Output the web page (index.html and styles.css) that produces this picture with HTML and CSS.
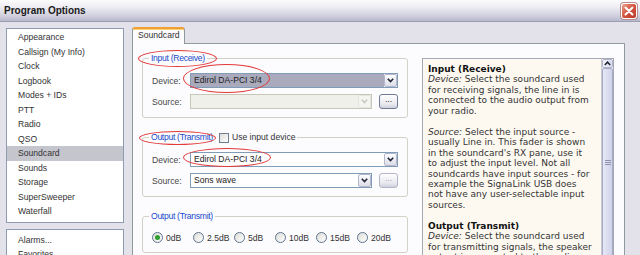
FILE: index.html
```html
<!DOCTYPE html>
<html lang="en">
<head>
    <meta charset="UTF-8">
    <title>Program Options</title>
    <link rel="stylesheet" href="styles.css">
</head>
<body>
    <div class="titlebar">
        <span class="title">Program Options</span>
        <span class="close">
            <svg width="10" height="10" viewBox="0 0 10 10"><path d="M1.5 1.5 L8.5 8.5 M8.5 1.5 L1.5 8.5" stroke="#fff" stroke-width="2" stroke-linecap="round"/></svg>
        </span>
    </div>

    <div class="main">
        <!-- page list -->
        <div class="sidebar">
            <ul class="nav-list">
                <li>Appearance</li>
                <li>Callsign (My Info)</li>
                <li>Clock</li>
                <li>Logbook</li>
                <li>Modes + IDs</li>
                <li>PTT</li>
                <li>Radio</li>
                <li>QSO</li>
                <li class="selected">Soundcard</li>
                <li>Sounds</li>
                <li>Storage</li>
                <li>SuperSweeper</li>
                <li>Waterfall</li>
            </ul>
            <ul class="nav-list extras">
                <li>Alarms...</li>
                <li>Favorites...</li>
            </ul>
        </div>

        <div class="tabs">
            <div class="tab-strip">
                <span class="tab">Soundcard</span>
            </div>
            <div class="tab-panel">
                <div class="settings">
                    <fieldset class="group">
                        <legend>Input (Receive)</legend>
                        <div class="fields">
                            <div class="row">
                                <label>Device:</label>
                                <div class="combo selected">
                                    <span class="value">Edirol DA-PCI 3/4</span>
                                    <span class="drop"><svg width="7" height="5" viewBox="0 0 7 5"><path d="M0.8 0.8 L3.5 3.6 L6.2 0.8" fill="none" stroke="#1e2233" stroke-width="1.6"/></svg></span>
                                </div>
                            </div>
                            <div class="row">
                                <label>Source:</label>
                                <div class="combo disabled">
                                    <span class="value"></span>
                                    <span class="drop"><svg width="7" height="5" viewBox="0 0 7 5"><path d="M0.8 0.8 L3.5 3.6 L6.2 0.8" fill="none" stroke="#c9c9c4" stroke-width="1.6"/></svg></span>
                                </div>
                                <button class="more">...</button>
                            </div>
                        </div>
                    </fieldset>

                    <fieldset class="group">
                        <legend>
                            <span>Output (Transmit)</span>
                            <span class="check"><span class="box"></span>Use input device</span>
                        </legend>
                        <div class="fields">
                            <div class="row">
                                <label>Device:</label>
                                <div class="combo">
                                    <span class="value">Edirol DA-PCI 3/4</span>
                                    <span class="drop"><svg width="7" height="5" viewBox="0 0 7 5"><path d="M0.8 0.8 L3.5 3.6 L6.2 0.8" fill="none" stroke="#1e2233" stroke-width="1.6"/></svg></span>
                                </div>
                            </div>
                            <div class="row">
                                <label>Source:</label>
                                <div class="combo">
                                    <span class="value">Sons wave</span>
                                    <span class="drop"><svg width="7" height="5" viewBox="0 0 7 5"><path d="M0.8 0.8 L3.5 3.6 L6.2 0.8" fill="none" stroke="#1e2233" stroke-width="1.6"/></svg></span>
                                </div>
                                <button class="more off">...</button>
                            </div>
                        </div>
                    </fieldset>

                    <fieldset class="group">
                        <legend>Output (Transmit)</legend>
                        <div class="levels">
                            <span class="radio"><span class="dot on"></span>0dB</span>
                            <span class="radio"><span class="dot"></span>2.5dB</span>
                            <span class="radio"><span class="dot"></span>5dB</span>
                            <span class="radio"><span class="dot"></span>10dB</span>
                            <span class="radio"><span class="dot"></span>15dB</span>
                            <span class="radio"><span class="dot"></span>20dB</span>
                        </div>
                    </fieldset>
                </div>

                <!-- help pane -->
                <div class="help">
                    <div class="help-text">
                        <h4>Input (Receive)</h4>
                        <p><em>Device:</em> Select the soundcard used<br>for receiving signals, the line in is<br>connected to the audio output from<br>your radio.</p>
                        <p><em>Source:</em> Select the input source -<br>usually Line in. This fader is shown<br>in the soundcard's RX pane, use it<br>to adjust the input level. Not all<br>soundcards have input sources - for<br>example the SignaLink USB does<br>not have any user-selectable input<br>sources.</p>
                        <h4>Output (Transmit)</h4>
                        <p><em>Device:</em> Select the soundcard used<br>for transmitting signals, the speaker<br>output is connected to the audio<br>input of your radio.</p>
                    </div>
                    <div class="scrollbar">
                        <span class="scroll-up"><svg width="7" height="5" viewBox="0 0 7 5"><path d="M0.8 4 L3.5 1.2 L6.2 4" fill="none" stroke="#1e2233" stroke-width="1.5"/></svg></span>
                        <span class="thumb"><span class="grip"></span></span>
                    </div>
                </div>

                <!-- red annotation rings -->
                <span class="mark mark-1"></span>
                <span class="mark mark-2"></span>
                <span class="mark mark-3"></span>
                <span class="mark mark-4"></span>
            </div>
        </div>
    </div>
</body>
</html>
```

FILE: styles.css
```css
* {
    box-sizing: border-box;
}

body {
    margin: 0;
    height: 255px;
    overflow: hidden;
    background: #e3e2ea;
    font-family: "Liberation Sans", Arial, sans-serif;
    font-size: 8.6px;
    color: #333;
}

/* 标题栏 */
.titlebar {
    height: 22px;
    display: flex;
    align-items: center;
    justify-content: space-between;
    padding: 0 3px 0 4px;
    background: linear-gradient(#fcfcfe, #ececf2 35%, #d0d0de 75%, #b7b8cc);
    border-bottom: 1px solid #9d9db3;
}

.title {
    font-size: 10px;
    font-weight: bold;
    color: #1a1a1a;
}

.close {
    width: 16px;
    height: 16px;
    display: flex;
    align-items: center;
    justify-content: center;
    border: 1px solid #fff;
    border-radius: 3px;
    background: linear-gradient(135deg, #eba08e, #d4533f 50%, #b9392a);
    box-shadow: 0 0 0 1px #b88c88;
}

.main {
    display: flex;
    align-items: flex-start;
    padding: 5px 15px 0 6px;
}

/* 左侧列表 */
.sidebar {
    width: 118px;
    margin-top: 1px;
    display: flex;
    flex-direction: column;
    gap: 6px;
}

.nav-list {
    list-style: none;
    margin: 0;
    padding: 1px 0 3px;
    background: #fff;
    border: 1px solid #8d9cb2;
}

.nav-list li {
    line-height: 14.5px;
    padding-left: 11px;
}

.nav-list li.selected {
    background: #c5c5cd;
}

.nav-list.extras {
    padding-top: 3px;
}

/* 选项卡 */
.tabs {
    flex: 1;
    margin-left: 8px;
}

.tab-strip {
    display: flex;
    height: 16px;
}

.tab {
    position: relative;
    z-index: 1;
    width: 53px;
    height: 17px;
    padding: 0 0 0 5px;
    line-height: 12px;
    background: #fcfcfe;
    border: 1px solid #919b9c;
    border-top: 2px solid #f0a03a;
    border-bottom: none;
    border-radius: 3px 3px 0 0;
    box-shadow: inset 0 1px 0 #ffd36a;
}

.tab-panel {
    position: relative;
    display: flex;
    align-items: flex-start;
    padding: 9px 10px 10px 9px;
    background: #fcfcfe;
    border: 1px solid #919b9c;
}

.settings {
    width: 266px;
    display: flex;
    flex-direction: column;
    gap: 14px;
}

.group {
    margin: 0;
    min-width: 0;
    padding: 9px 9px 8px;
    border: 1px solid #d3d1c6;
    border-radius: 3px;
}

.group legend {
    display: flex;
    align-items: center;
    margin-left: -3px;
    padding: 0 2px;
    line-height: 11px;
    letter-spacing: -0.3px;
    color: #2149c9;
}

.check {
    display: flex;
    align-items: center;
    margin-left: 6px;
    letter-spacing: 0;
    color: #333;
}

.check .box {
    width: 10px;
    height: 10px;
    margin-right: 3px;
    border: 1px solid #6f7f92;
    background: linear-gradient(135deg, #dcdcd6, #fff);
}

.fields {
    display: flex;
    flex-direction: column;
    gap: 6px;
}

.row {
    display: flex;
    align-items: center;
    height: 15px;
}

.row label {
    width: 38px;
    color: #474747;
}

/* 下拉框 */
.combo {
    flex: 1;
    height: 15px;
    display: flex;
    border: 1px solid #7f9db9;
    background: #fff;
}

.combo .value {
    flex: 1;
    padding-left: 3px;
    line-height: 13px;
    color: #222;
}

.combo.selected .value {
    background: #a9aabc;
}

.combo .drop {
    width: 13px;
    display: flex;
    align-items: center;
    justify-content: center;
    border: 1px solid #b4b7cc;
    border-radius: 2px;
    background: linear-gradient(#fdfdff, #dcdde8);
}

.combo.disabled {
    border-color: #c9c7ba;
    background: #f0f0eb;
}

.combo.disabled .drop {
    border-color: #e4e4de;
    background: #f4f4f0;
}

.more {
    width: 19px;
    height: 15px;
    margin-left: 7px;
    padding: 0 0 4px;
    font: inherit;
    line-height: 9px;
    color: #333;
    border: 1px solid #6f7a96;
    border-radius: 3px;
    background: linear-gradient(#fff, #e8e8ef 70%, #cfd0dc);
}

.more.off {
    color: #a5a5ad;
    border-color: #b3b6c6;
}

/* 单选 */
.levels {
    display: grid;
    grid-template-columns: repeat(6, 41px);
    height: 13px;
    align-items: center;
}

.radio {
    display: flex;
    align-items: center;
    gap: 3px;
    color: #333;
}

.radio .dot {
    width: 11px;
    height: 11px;
    display: flex;
    align-items: center;
    justify-content: center;
    border: 1px solid #5e7491;
    border-radius: 50%;
    background: linear-gradient(135deg, #dcdcd6, #fff);
}

.radio .dot.on::after {
    content: "";
    width: 5px;
    height: 5px;
    border-radius: 50%;
    background: #2f9e33;
}

/* 帮助面板 */
.help {
    width: 192px;
    height: 200px;
    margin: 5px 0 0 14px;
    display: flex;
    overflow: hidden;
    border: 1px solid #a4a9b5;
    background: #fdf9f1;
}

.help-text {
    flex: 1;
    padding: 5px 0 0 5px;
    font-family: "DejaVu Sans", Verdana, sans-serif;
    font-size: 9px;
    line-height: 10.45px;
    color: #333;
    white-space: nowrap;
}

.help-text h4 {
    margin: 0;
    font-size: 9px;
    color: #111;
}

.help-text p {
    margin: 0 0 10.45px;
}

.scrollbar {
    width: 12px;
    display: flex;
    flex-direction: column;
    background: #f3f3f6;
    border-left: 1px solid #c9c9d3;
}

.scroll-up {
    height: 14px;
    display: flex;
    align-items: center;
    justify-content: center;
    border: 1px solid #b3b6cb;
    border-radius: 2px;
    background: linear-gradient(90deg, #f4f4fb, #d9dbee);
}

.thumb {
    height: 308px;
    display: flex;
    align-items: center;
    justify-content: center;
    border: 1px solid #a8abc6;
    border-radius: 2px;
    background: linear-gradient(90deg, #e6e7f6, #d0d2ea);
}

.grip {
    width: 6px;
    height: 5px;
    border-top: 1px solid #9093b0;
    border-bottom: 1px solid #9093b0;
    background: linear-gradient(#9093b0, #9093b0) center / 6px 1px no-repeat;
}

/* 红圈标注 */
.mark {
    position: absolute;
    border: 1px solid #e23a3a;
    border-radius: 50%;
    pointer-events: none;
}

.mark-1 { left: 5px;  top: 6px;   width: 79px; height: 17px; }
.mark-2 { left: 50px; top: 20px;  width: 87px; height: 29px; }
.mark-3 { left: 6px;  top: 87px;  width: 77px; height: 14px; }
.mark-4 { left: 50px; top: 104px; width: 88px; height: 19px; }
```
